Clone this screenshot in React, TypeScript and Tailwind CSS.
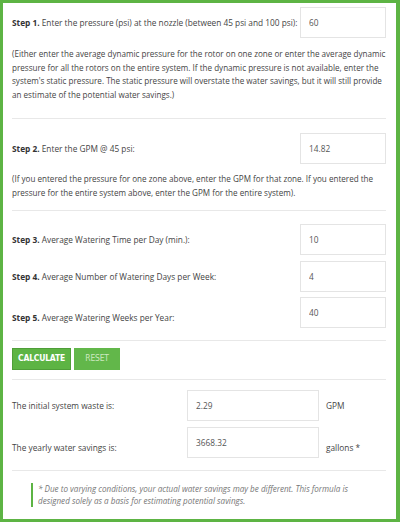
import React, { useState } from "react";

const font = { fontFamily: '"Open Sans", "Liberation Sans", sans-serif' };
const narrow = { fontFamily: '"Liberation Sans Narrow", "DejaVu Sans Condensed", sans-serif' };

const Field = ({ value, className = "" }: { value: string; className?: string }) => (
  <input
    defaultValue={value}
    className={`h-[31px] border border-[#e4e4e4] bg-white px-[8px] text-[8.3px] text-[#555] outline-none ${className}`}
  />
);

const Divider = ({ className = "" }: { className?: string }) => (
  <div className={`h-px bg-[#e8e8e8] ${className}`} />
);

export default function App() {
  const [waste] = useState("2.29");
  const [savings] = useState("3668.32");

  return (
    <div
      style={font}
      className="w-[400px] h-[522px] border-t-[3px] border-l-[3px] border-b-[3px] border-r-[4px] border-[#5db444] bg-white pl-[9px] pr-[10px] text-[8.3px] leading-[13.5px] text-[#444]"
    >
      {/* Step 1 */}
      <div className="mt-[4px] flex items-center justify-between">
        <div>
          <b className="font-bold text-[#333]">Step 1.</b> Enter the pressure (psi) at the nozzle (between 45 psi and 100 psi):
        </div>
        <Field value="60" className="w-[86px] h-[30px]" />
      </div>
      <p className="mt-[9px] whitespace-nowrap text-[8.1px]">
        (Either enter the average dynamic pressure for the rotor on one zone or enter the average dynamic
        <br />
        pressure for all the rotors on the entire system. If the dynamic pressure is not available, enter the
        <br />
        system's static pressure. The static pressure will overstate the water savings, but it will still provide
        <br />
        an estimate of the potential water savings.)
      </p>
      <Divider className="mt-[17px]" />

      {/* Step 2 */}
      <div className="mt-[14px] flex items-center justify-between">
        <div>
          <b className="font-bold text-[#333]">Step 2.</b> Enter the GPM @ 45 psi:
        </div>
        <Field value="14.82" className="w-[86px] h-[30px]" />
      </div>
      <p className="mt-[8px] leading-[14px] whitespace-nowrap text-[8.1px]">
        (If you entered the pressure for one zone above, enter the GPM for that zone. If you entered the
        <br />
        pressure for the entire system above, enter the GPM for the entire system).
      </p>
      <Divider className="mt-[10px]" />

      {/* Steps 3-5 */}
      <div className="mt-[13px] flex items-center justify-between">
        <div>
          <b className="font-bold text-[#333]">Step 3.</b> Average Watering Time per Day (min.):
        </div>
        <Field value="10" className="w-[86px]" />
      </div>
      <div className="mt-[6px] flex items-center justify-between">
        <div>
          <b className="font-bold text-[#333]">Step 4.</b> Average Number of Watering Days per Week:
        </div>
        <Field value="4" className="w-[86px]" />
      </div>
      <div className="mt-[5px] flex items-start justify-between">
        <div className="pt-[14px]">
          <b className="font-bold text-[#333]">Step 5.</b> Average Watering Weeks per Year:
        </div>
        <Field value="40" className="w-[86px]" />
      </div>
      <Divider className="mt-[12px]" />

      {/* Buttons */}
      <div className="mt-[7px] flex gap-[3px]">
        <button
          style={narrow}
          className="h-[22px] w-[59px] border border-[#4f9e39] bg-[#5db444] text-[8.5px] font-bold uppercase tracking-tight text-white"
        >
          Calculate
        </button>
        <button
          style={narrow}
          className="h-[22px] w-[46px] bg-[#62b74a] text-[8.5px] uppercase tracking-tight text-[#cde8c0]"
        >
          Reset
        </button>
      </div>
      <Divider className="mt-[9px]" />

      {/* Results */}
      <div className="mt-[10px] flex items-center">
        <div className="w-[175px]">The initial system waste is:</div>
        <Field value={waste} className="w-[132px]" />
        <div className="ml-[7px]">GPM</div>
      </div>
      <div className="mt-[6px] flex items-start">
        <div className="w-[175px] pt-[14px]">The yearly water savings is:</div>
        <Field value={savings} className="w-[132px] h-[30px]" />
        <div className="ml-[7px] pt-[14px]">gallons *</div>
      </div>
      <Divider className="mt-[12px]" />

      {/* Note */}
      <div className="ml-[19px] mt-[12px] border-l-2 border-[#5db444] pl-[5px] text-[8.1px] italic leading-[12px] text-[#777]">
        * Due to varying conditions, your actual water savings may be different. This formula is
        <br />
        designed solely as a basis for estimating potential savings.
      </div>
    </div>
  );
}
